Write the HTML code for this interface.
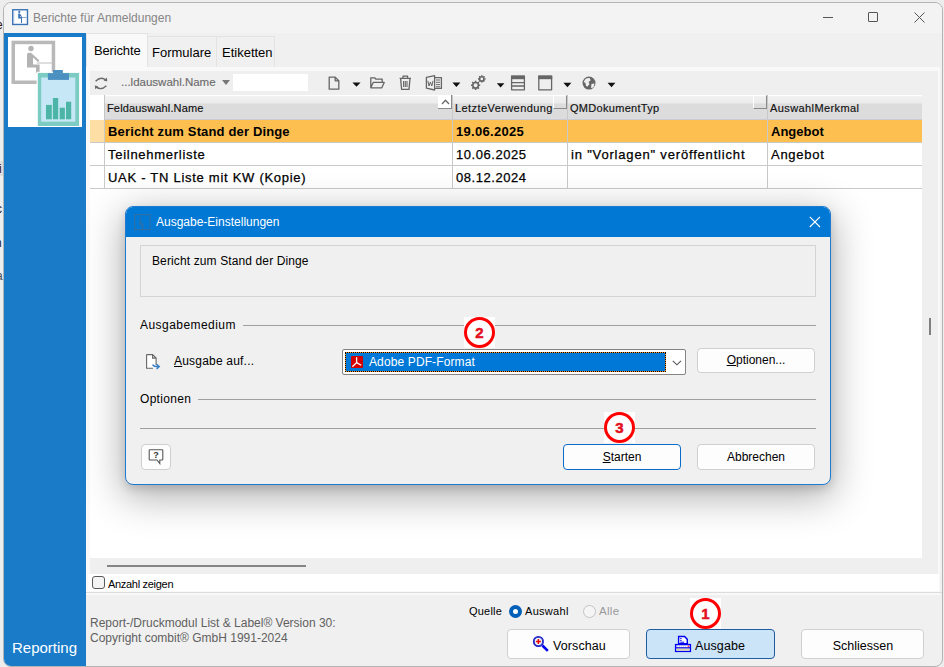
<!DOCTYPE html>
<html><head><meta charset="utf-8">
<style>
*{box-sizing:border-box;margin:0;padding:0}
html,body{width:944px;height:667px;overflow:hidden;background:#ededed;font-family:"Liberation Sans",sans-serif;font-size:12px;color:#000}
.a{position:absolute;white-space:nowrap}
#win{position:absolute;left:3px;top:2px;width:940px;height:665px;background:#f0f0f0;border:1px solid #b4b4b4;border-radius:8px;overflow:hidden}
.btn{position:absolute;background:#fdfdfd;border:1px solid #d0d0d0;border-radius:4px;text-align:center}
.hd{position:absolute;top:0;height:24px;border-right:1px solid #c8c8c8;font-size:11px;padding:0 0 0 2px;line-height:26px;color:#111;letter-spacing:0.15px;-webkit-text-stroke:0.15px #111}
.cell{position:absolute;height:23px;border-bottom:1px solid #c9c9c9;border-right:1px solid #c9c9c9;font-size:13px;line-height:23px;padding-left:3px}
.b{font-weight:bold}
.sb{letter-spacing:0.72px;-webkit-text-stroke:0.25px #000}
</style></head><body>
<div class="a" style="left:0;top:161px;width:4px;height:15px;background:#dedede"></div>
<div class="a" style="left:-4px;top:18px;font-size:12px;color:#301010">e</div>
<div class="a" style="left:-5px;top:162px;font-size:12px;color:#401010">ri</div>
<div class="a" style="left:-4px;top:202px;font-size:12px;color:#202030">c</div>
<div class="a" style="left:-5px;top:236px;font-size:12px;color:#202030">n</div>
<div class="a" style="left:-4px;top:269px;font-size:12px;color:#405060">a</div>
<!-- window (coords inside win are page - (4,3)) -->
<div id="win">
  <!-- title bar -->
  <div class="a" style="left:0;top:0;width:938px;height:30px;background:#f3f3f3"></div>
  <svg class="a" style="left:8px;top:6px" width="17" height="17" viewBox="0 0 17 17">
    <rect x="0.75" y="0.75" width="14.7" height="14.7" fill="#fff" stroke="#3a72b6" stroke-width="1.4"/>
    <path d="M2.6 2.6 V13.6 M14 2.6 V13.6" stroke="#dfe8f2" stroke-width="0.8"/>
    <path d="M9.6 8.5 H14.6" stroke="#7ea3d0" stroke-width="0.9"/>
    <circle cx="7.3" cy="2.9" r="1.05" fill="#3a72b6"/>
    <path d="M6.2 4.6 H7.9 L9.9 7.6 L9.3 8.2 L8 6.8 V8.1 H10 V14 H9 V9.6 H6.2 Z" fill="#3a72b6"/>
  </svg>
  <div class="a" style="left:29px;top:8px;font-size:12px;color:#858585">Berichte für Anmeldungen</div>
  <div class="a" style="left:819px;top:14px;width:10px;height:1px;background:#555"></div>
  <div class="a" style="left:864px;top:9px;width:10px;height:10px;border:1px solid #555;border-radius:1px"></div>
  <svg class="a" style="left:910px;top:9px" width="11" height="11" viewBox="0 0 11 11"><path d="M0.5 0.5L10.5 10.5M10.5 0.5L0.5 10.5" stroke="#555" stroke-width="1"/></svg>

  <!-- left blue panel -->
  <div class="a" style="left:0;top:30px;width:82px;height:636px;background:#1a7bc9"></div>
  <div class="a" style="left:4px;top:34px;width:74px;height:90px;background:#fff"></div>
  <svg class="a" style="left:3px;top:34px" width="75" height="90" viewBox="0 0 75 90">
    <rect x="6.25" y="5.45" width="40.2" height="39.8" fill="none" stroke="#b9b9b9" stroke-width="3.5"/>
    <circle cx="24" cy="11.5" r="2.7" fill="#b3b3b3"/>
    <path d="M20 17.5 Q20 15.8 22 15.8 L24 15.8 L32.5 23.5 L31 25 L26 20.5 L26 27.5 L32.6 27.5 L32.6 36 L29 36 L29 30.6 L20 30.6 Z" fill="#b3b3b3"/>
    <rect x="29.8" y="25.2" width="15.2" height="1.6" fill="#d6d6d6"/>
    <rect x="29.6" y="34.8" width="44" height="56" fill="#fff"/>
    <rect x="30.8" y="35.9" width="41.3" height="53.1" fill="#7dccc3"/>
    <rect x="34.2" y="40.5" width="34.1" height="44.2" fill="#c6e8f6"/>
    <rect x="40.9" y="36.2" width="21.1" height="6.7" fill="#4b90c1"/>
    <rect x="46" y="33" width="9.8" height="3.4" fill="#4b90c1"/>
    <rect x="39" y="67.9" width="5.8" height="14.4" fill="#4db5a8"/>
    <rect x="45.9" y="61" width="5.3" height="21.3" fill="#4db5a8"/>
    <rect x="52.7" y="70.7" width="5.2" height="11.6" fill="#4db5a8"/>
    <rect x="59" y="64.7" width="5.2" height="17.6" fill="#4db5a8"/>
  </svg>
  <div class="a" style="left:8px;top:636px;font-size:15px;color:#fff">Reporting</div>

  <!-- tabs -->
  <div class="a" style="left:82px;top:30px;width:62px;height:35px;background:#f9f9f9;border:1px solid #e3e3e3;border-bottom:none"></div>
  <div class="a" style="left:90px;top:40px;font-size:13px;letter-spacing:-0.15px">Berichte</div>
  <div class="a" style="left:143px;top:33px;width:70px;height:32px;background:#f0f0f0;border:1px solid #e3e3e3;border-bottom:none"></div>
  <div class="a" style="left:148px;top:42px;font-size:13px">Formulare</div>
  <div class="a" style="left:212px;top:33px;width:59px;height:32px;background:#f0f0f0;border:1px solid #e3e3e3;border-bottom:none"></div>
  <div class="a" style="left:218px;top:42px;font-size:13px">Etiketten</div>

  <!-- content frame -->
  <div class="a" style="left:82px;top:64px;width:854px;height:528px;background:#f9f9f9"></div>
  <div class="a" style="left:86px;top:68px;width:848px;height:503px;background:#efefef"></div>
  <!-- toolbar -->
  <div class="a" style="left:86px;top:68px;width:848px;height:24px;background:#efefef"></div>
  <svg class="a" style="left:90px;top:71px" width="20" height="20" viewBox="0 0 20 20"><g fill="none" stroke="#6a6a6a" stroke-width="1.4"><path d="M1.6 7.2 Q7 1.6 12.2 6.4"/><path d="M12.4 11.8 Q7 17 1.8 12.6"/></g><path d="M9.6 6.6 L13.2 7.6 L13 3.6 Z M4.2 12.2 L0.8 11.4 L1.2 15.2 Z" fill="#6a6a6a"/></svg>
  <div class="a" style="left:117px;top:73px;font-size:11.5px;color:#6c6c6c;-webkit-text-stroke:0.15px #6c6c6c">...ldauswahl.Name</div>
  <svg class="a" style="left:218px;top:77px" width="8" height="5" viewBox="0 0 8 5"><path d="M0 0H8L4 5Z" fill="#777"/></svg>
  <div class="a" style="left:229px;top:71px;width:75px;height:17px;background:#fff"></div>
  <!-- toolbar icons moved -->

  <!-- grid -->
  <div class="a" style="left:86px;top:92px;width:832px;height:463px;background:#fff"></div>
  <div class="a" style="left:86px;top:92px;width:832px;height:25px;background:linear-gradient(#fff 0,#fff 1px,#f2f2f2 1px,#ebebeb 8px,#dcdcdc 9px,#dcdcdc 24px,#c9ccd2 24px)">
    <div class="hd" style="left:0;width:15px;background:#fff;border-right:1px solid #c5c5c5;height:25px"></div>
    <div class="hd" style="left:15px;width:348px">Feldauswahl.Name</div>
    <div class="hd" style="left:363px;width:115px;letter-spacing:0.42px">LetzteVerwendung</div>
    <div class="hd" style="left:478px;width:200px;letter-spacing:0.3px">QMDokumentTyp</div>
    <div class="hd" style="left:678px;width:154px;border-right:none;letter-spacing:0.4px">AuswahlMerkmal</div>
  </div>
  <!-- sort box + grips -->
  <div class="a" style="left:434px;top:92px;width:14px;height:14px;background:#fff;border-right:1px solid #8a8a8a;border-bottom:1px solid #8a8a8a"></div>
  <svg class="a" style="left:437px;top:96px" width="9" height="6" viewBox="0 0 9 6"><path d="M1 5 L4.5 1.2 L8 5" fill="none" stroke="#6a6a6a" stroke-width="1.3"/></svg>
  <div class="a" style="left:549px;top:92px;width:14px;height:14px;border-left:1px solid #fff;border-top:1px solid #fff;border-right:1px solid #8a8a8a;border-bottom:1px solid #8a8a8a"></div>
  <div class="a" style="left:749px;top:92px;width:14px;height:14px;border-left:1px solid #fff;border-top:1px solid #fff;border-right:1px solid #8a8a8a;border-bottom:1px solid #8a8a8a"></div>
  <!-- rows -->
  <div class="a" style="left:86px;top:117px">
    <div class="cell" style="left:0;top:0;width:15px;background:#fddfa6"></div>
    <div class="cell b" style="left:15px;top:0;width:348px;background:#fdbf50;letter-spacing:0.15px">Bericht zum Stand der Dinge</div>
    <div class="cell b" style="left:363px;top:0;width:115px;background:#fdbf50;letter-spacing:0.3px">19.06.2025</div>
    <div class="cell" style="left:478px;top:0;width:200px;background:#fdbf50"></div>
    <div class="cell b" style="left:678px;top:0;width:154px;background:#fdbf50;border-right:none">Angebot</div>
    <div class="cell" style="left:0;top:23px;width:15px"></div>
    <div class="cell sb" style="left:15px;top:23px;width:348px">Teilnehmerliste</div>
    <div class="cell sb" style="left:363px;top:23px;width:115px;letter-spacing:0.55px">10.06.2025</div>
    <div class="cell sb" style="left:478px;top:23px;width:200px;letter-spacing:0.82px">in "Vorlagen" veröffentlicht</div>
    <div class="cell sb" style="left:678px;top:23px;width:154px;border-right:none">Angebot</div>
    <div class="cell" style="left:0;top:46px;width:15px"></div>
    <div class="cell sb" style="left:15px;top:46px;width:348px">UAK - TN Liste mit KW (Kopie)</div>
    <div class="cell sb" style="left:363px;top:46px;width:115px;letter-spacing:0.55px">08.12.2024</div>
    <div class="cell" style="left:478px;top:46px;width:200px"></div>
    <div class="cell" style="left:678px;top:46px;width:154px;border-right:none"></div>
  </div>
  <!-- h scrollbar -->
  <div class="a" style="left:86px;top:555px;width:832px;height:16px;background:#efefef"></div>
  <div class="a" style="left:103px;top:562px;width:199px;height:2px;background:#858585"></div>
  <!-- checkbox row -->
  <div class="a" style="left:84px;top:571px;width:851px;height:17px;background:#fff"></div><div class="a" style="left:82px;top:589px;width:856px;height:1px;background:#dcdcdc"></div>
  <div class="a" style="left:88px;top:573px;width:13px;height:13px;border:1px solid #5a5a5a;border-radius:3px;background:#f4f4f4"></div>
  <div class="a" style="left:104px;top:575px;font-size:11px;letter-spacing:-0.3px">Anzahl zeigen</div>

  <!-- vertical indicator -->
  <div class="a" style="left:925px;top:315px;width:2px;height:17px;background:#808080"></div>

  <!-- footer -->
  <div class="a" style="left:86px;top:613px;font-size:12px;color:#606060;line-height:15px">Report-/Druckmodul List &amp; Label® Version 30:<br>Copyright combit® GmbH 1991-2024</div>
  <div class="a" style="left:465px;top:602px;font-size:11px;letter-spacing:0.2px">Quelle</div>
  <div class="a" style="left:505px;top:602px;width:13px;height:13px;border-radius:50%;background:#005fb8"></div>
  <div class="a" style="left:509px;top:606px;width:5px;height:5px;border-radius:50%;background:#fff"></div>
  <div class="a" style="left:521px;top:602px;font-size:11px;letter-spacing:0.3px">Auswahl</div>
  <div class="a" style="left:579px;top:602px;width:13px;height:13px;border-radius:50%;border:1px solid #c4c4c4;background:#f5f5f5"></div>
  <div class="a" style="left:595px;top:602px;font-size:11.5px;color:#999;letter-spacing:0.3px">Alle</div>

  <div class="btn" style="left:503px;top:626px;width:123px;height:30px"></div>
  <svg class="a" style="left:524px;top:629px" width="22" height="22" viewBox="0 0 22 22"><circle cx="10.4" cy="9.5" r="4.6" fill="#eef6f8" stroke="#0000f0" stroke-width="1.8"/><circle cx="10.4" cy="9.5" r="4.6" fill="none" stroke="#808070" stroke-width="0.6"/><path d="M10.4 7V12 M7.9 9.5H12.9" stroke="#f00000" stroke-width="1.5"/><path d="M14.4 13.5L19.8 18.9" stroke="#0000f0" stroke-width="2.6"/></svg>
  <div class="a" style="left:549px;top:636px;font-size:12.5px;letter-spacing:0.1px">Vorschau</div>

  <div class="btn" style="left:642px;top:626px;width:129px;height:30px;background:#cce4f7;border-color:#1f5c9e"></div>
  <svg class="a" style="left:666px;top:629px" width="22" height="22" viewBox="0 0 22 22"><path d="M8.6 4.5 H14.6 L17.3 7.4 V11.8 H8.6 Z" fill="#fff" stroke="#0000f0" stroke-width="1.4"/><path d="M10.2 6.6H11.6 M10.2 8.4H11.6 M10.2 10.2H14.2" stroke="#0000f0" stroke-width="1"/><rect x="5.6" y="12.6" width="14.8" height="6.8" fill="#fff" stroke="#0000f0" stroke-width="1.4"/><rect x="6.4" y="16.4" width="13.2" height="2.2" fill="#d8d4a8"/><path d="M5.6 15.8H20.4" stroke="#0000f0" stroke-width="1.2"/><circle cx="18.3" cy="14.2" r="0.7" fill="#f00"/><path d="M7 14.2H16.5" stroke="#aaa" stroke-width="0.8" stroke-dasharray="1 1"/></svg>
  <div class="a" style="left:691px;top:636px;font-size:12.5px;letter-spacing:0.1px">Ausgabe</div>

  <div class="btn" style="left:797px;top:626px;width:123px;height:30px"></div>
  <div class="a" style="left:798px;top:636px;width:122px;text-align:center;font-size:12.5px">Schliessen</div>

  <!-- annotation 1 -->
  <div class="a" style="left:686px;top:595px;width:31px;height:31px;background:#fff"></div>
  <div class="a" style="left:686px;top:595px;width:31px;height:31px;border:3.2px solid #fe0000;border-radius:50%"></div>
  <div class="a" style="left:686px;top:595px;width:31px;height:31px;color:#e3101e;font-weight:bold;font-size:15px;text-align:center;line-height:31px;-webkit-text-stroke:0.5px #e3101e">1</div>
</div>

<svg class="a" style="left:0;top:0" width="944" height="100" viewBox="0 0 944 100">
  <g fill="none" stroke="#666" stroke-width="1.3" stroke-linejoin="round">
    <path d="M329.2 77.2 H335.2 L338.8 80.8 V89.2 H329.2 Z M335.2 77.2 V80.8 H338.8"/>
    <path d="M370.8 87.8 V77.8 H374.6 L376 79.2 H382.2 V82 M370.8 87.8 L373.2 82.4 H384.2 L381.8 87.8 Z"/>
    <path d="M399.6 78.4 H411 M403 78.4 V76.2 H407.6 V78.4 M400.6 78.4 L401.6 89.4 H409 L410 78.4"/>
    <path d="M403.6 81 V87 M405.3 81 V87 M407 81 V87" stroke-width="1.1"/>
    <path d="M426.4 77.4 L434.6 75.6 V90 L426.4 88.2 Z M434.6 77.6 H441.4 V88.4 H434.6" />
    <path d="M436 80 H440 M436 82.3 H440 M436 84.6 H440 M436 86.8 H440" stroke-width="1"/>
    <path d="M427.8 80.8 L429 86 L430.4 82 L431.8 86 L433 80.8" stroke-width="1"/>
    <path d="M511.6 76.2 H524.4 V89.8 H511.6 Z M511.6 82.6 H524.4 M511.6 86 H524.4"/>
    <path d="M538.8 76.2 H551.6 V89.8 H538.8 Z"/>
  </g>
  <rect x="511" y="75.6" width="14" height="3.6" fill="#666"/>
  <rect x="538.2" y="75.6" width="14" height="3.6" fill="#666"/>
  <g fill="none" stroke="#666" stroke-width="1.6">
    <circle cx="475.6" cy="85.3" r="2.8"/>
    <circle cx="481.8" cy="78.9" r="2.2"/>
  </g>
  <g stroke="#666" stroke-width="1.6">
    <path d="M475.6 80.7V82 M475.6 88.6V89.9 M471 85.3H472.3 M478.9 85.3H480.2 M472.3 82L473.3 83 M477.9 87.6L478.9 88.6 M472.3 88.6L473.3 87.6 M477.9 83L478.9 82"/>
    <path d="M481.8 75.2V76.2 M481.8 81.6V82.6 M478.1 78.9H479.1 M484.5 78.9H485.5 M479.2 76.3L479.9 77 M483.7 80.8L484.4 81.5 M479.2 81.5L479.9 80.8 M483.7 77L484.4 76.3"/>
  </g>
  <circle cx="589" cy="83.1" r="6.5" fill="#666"/>
  <path d="M585 79.5 Q587.5 77.5 590 78.2 L590.5 80.5 L588.5 82 L589.5 84 L587.5 86.5 L586 86 L585.5 83 L583.8 82 Z M591.5 84 L594.5 83.5 L593.5 87.5 L591 88 Z" fill="#efefef"/>
  <path d="M352.4 82.4 H360.6 L356.5 86.7 Z M452.4 82.6 H460.4 L456.4 86.9 Z M496.8 83.2 H504.4 L500.6 87.4 Z M563.4 82.8 H571.4 L567.4 87.2 Z M607.6 82.8 H615.4 L611.5 87.2 Z" fill="#111"/>
</svg>
<!-- dialog -->
<div class="a" style="left:125px;top:206px;width:706px;height:279px;background:#f0f0f0;border:1px solid #1f7ad0;border-radius:8px;box-shadow:0 10px 38px 3px rgba(0,0,0,0.30),0 4px 10px rgba(0,0,0,0.14);overflow:hidden">
  <div class="a" style="left:0;top:0;width:704px;height:30px;background:#0078d4"></div>
  <svg class="a" style="left:8px;top:7px" width="17" height="17" viewBox="0 0 17 17" opacity="0.55">
    <rect x="0.6" y="0.6" width="15.4" height="15" fill="none" stroke="#5a6a80" stroke-width="1.1"/>
    <circle cx="7" cy="3.6" r="0.9" fill="#5a6a80"/>
    <path d="M6 5.2 V10 H8.5 V15" fill="none" stroke="#5a6a80" stroke-width="1.5"/>
  </svg>
  <div class="a" style="left:30px;top:8px;font-size:12px;color:#fff">Ausgabe-Einstellungen</div>
  <svg class="a" style="left:683px;top:9px" width="12" height="12" viewBox="0 0 12 12"><path d="M0.8 0.8L11 11M11 0.8L0.8 11" stroke="#fff" stroke-width="1.1"/></svg>

  <div class="a" style="left:14px;top:38px;width:676px;height:52px;border:1px solid #d4d4d4"></div>
  <div class="a" style="left:26px;top:47px;font-size:12px;letter-spacing:0.12px">Bericht zum Stand der Dinge</div>

  <div class="a" style="left:14px;top:111px;font-size:12px;letter-spacing:0.45px">Ausgabemedium</div>
  <div class="a" style="left:117px;top:118px;width:573px;height:1px;background:#a0a0a0"></div>
  <svg class="a" style="left:19px;top:146px" width="18" height="18" viewBox="0 0 18 18">
    <path d="M1.6 1.6 H7.6 L11.1 5.1 V15.2 H1.6 Z" fill="#fff"/><path d="M1.6 1.6 H7.6 L11.1 5.1 V12 M8 15.2 H1.6 V1.6 M7.6 1.6 V5.1 H11.1" fill="none" stroke="#666" stroke-width="1.1"/>
    <path d="M7.6 11.6 Q9 14 13.5 13.7" fill="none" stroke="#3a7fc4" stroke-width="1.5"/>
    <path d="M11.5 11.2 L14.2 13.6 L11.6 16" fill="none" stroke="#3a7fc4" stroke-width="1.5"/>
  </svg>
  <div class="a" style="left:48px;top:147px;font-size:12px;letter-spacing:0.2px"><u>A</u>usgabe auf...</div>

  <div class="a" style="left:216px;top:142px;width:344px;height:26px;border:1px solid #848484;border-radius:2px;background:#fff"></div>
  <div class="a" style="left:219px;top:145px;width:321px;height:20px;background:#0078d7;border:1px solid #f7941d"></div>
  <div class="a" style="left:219px;top:145px;width:321px;height:20px;border:1px dotted #000"></div>
  <svg class="a" style="left:225px;top:149px" width="12" height="12" viewBox="0 0 12 12">
    <path d="M0.8 0 H11.2 L12 0.8 V11.2 L11.2 12 H0.8 L0 11.2 V0.8 Z" fill="#d40000"/>
    <path d="M5.6 1.6 V6.6 M5.6 6.6 L1.8 10.2 M5.6 6.6 L9.8 9" fill="none" stroke="#fff" stroke-width="1.3" stroke-linecap="round"/>
  </svg>
  <div class="a" style="left:243px;top:148px;font-size:12px;color:#fff;letter-spacing:0.12px">Adobe PDF-Format</div>
  <svg class="a" style="left:546px;top:153px" width="10" height="6" viewBox="0 0 10 6"><path d="M0.8 0.8L4.9 4.8L9 0.8" fill="none" stroke="#555" stroke-width="1.1"/></svg>

  <div class="btn" style="left:571px;top:141px;width:118px;height:25px"></div>
  <div class="a" style="left:571px;top:146px;width:118px;text-align:center;font-size:12px"><u>O</u>ptionen...</div>

  <div class="a" style="left:14px;top:185px;font-size:12px;letter-spacing:0.3px">Optionen</div>
  <div class="a" style="left:72px;top:192px;width:618px;height:1px;background:#a0a0a0"></div>
  <div class="a" style="left:14px;top:221px;width:676px;height:1px;background:#a0a0a0"></div>

  <div class="btn" style="left:15px;top:237px;width:30px;height:26px;border-color:#cfcfcf"></div>
  <svg class="a" style="left:22px;top:241px" width="16" height="17" viewBox="0 0 16 17">
    <path d="M2 1.8 H14 Q14.8 1.8 14.8 2.6 V11.2 Q14.8 12 14 12 H11.8 V15.6 L9 12 H2 Q1.2 12 1.2 11.2 V2.6 Q1.2 1.8 2 1.8 Z" fill="#fff" stroke="#555" stroke-width="1.1"/>
    <text x="8" y="9.6" font-size="9" font-weight="bold" text-anchor="middle" fill="#333" font-family="Liberation Sans">?</text>
  </svg>

  <div class="btn" style="left:437px;top:237px;width:118px;height:26px;border-color:#0a6cc8"></div>
  <div class="a" style="left:437px;top:243px;width:118px;text-align:center;font-size:12px"><u>S</u>tarten</div>
  <div class="btn" style="left:571px;top:237px;width:118px;height:26px"></div>
  <div class="a" style="left:571px;top:243px;width:118px;text-align:center;font-size:12px">Abbrechen</div>

  <!-- annotations -->
  <div class="a" style="left:338px;top:110px;width:31px;height:31px;background:#fff"></div>
  <div class="a" style="left:338px;top:110px;width:31px;height:31px;border:3.2px solid #fe0000;border-radius:50%"></div>
  <div class="a" style="left:338px;top:110px;width:31px;height:31px;color:#e3101e;font-weight:bold;font-size:15px;text-align:center;line-height:31px;-webkit-text-stroke:0.5px #e3101e">2</div>
  <div class="a" style="left:478px;top:205px;width:31px;height:31px;background:#fff"></div>
  <div class="a" style="left:478px;top:205px;width:31px;height:31px;border:3.2px solid #fe0000;border-radius:50%"></div>
  <div class="a" style="left:478px;top:205px;width:31px;height:31px;color:#e3101e;font-weight:bold;font-size:15px;text-align:center;line-height:31px;-webkit-text-stroke:0.5px #e3101e">3</div>
</div>
</body></html>
